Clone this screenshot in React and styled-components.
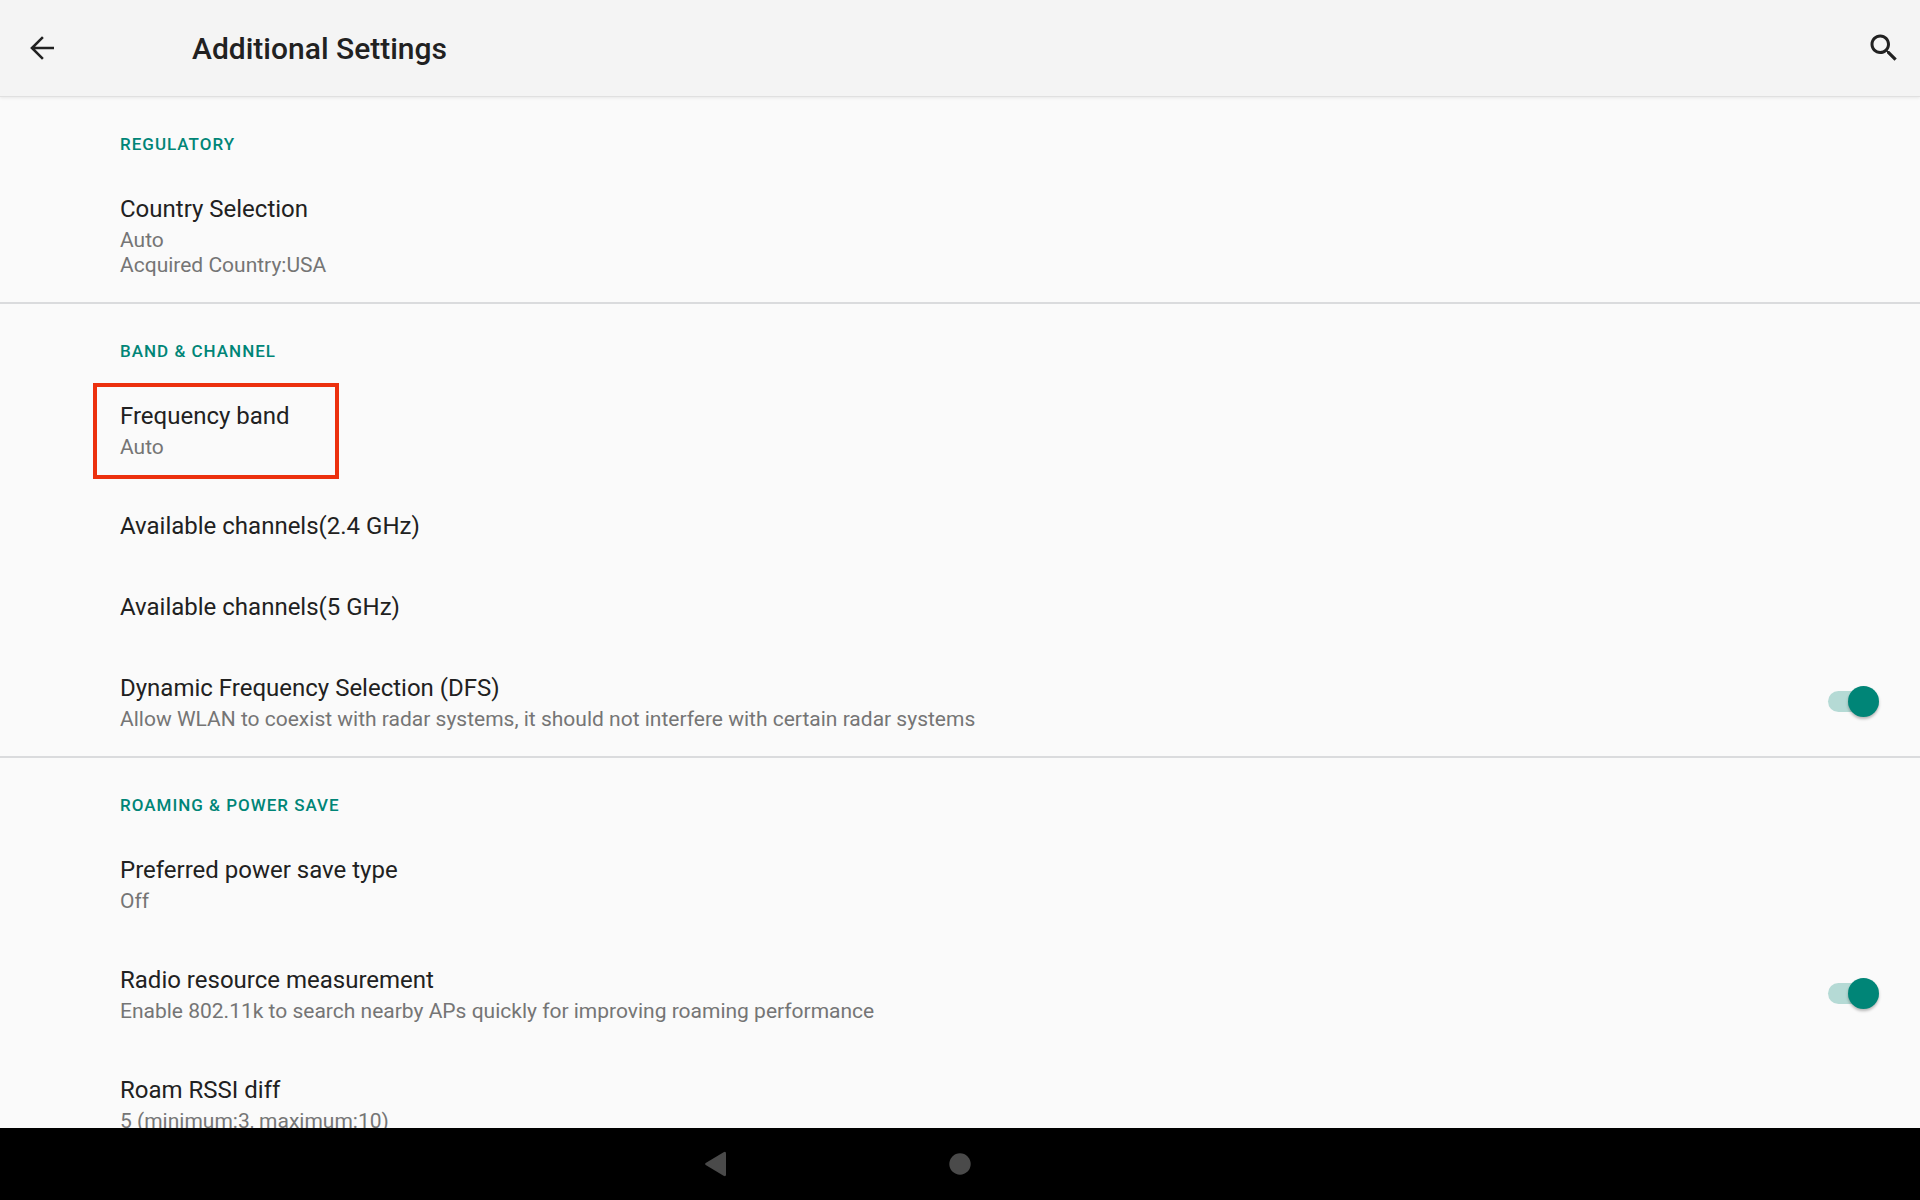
import React, { useId } from "react";
import styled, { createGlobalStyle } from "styled-components";

const GlobalStyle = createGlobalStyle`
  *, *::before, *::after { box-sizing: border-box; }
  body {
    margin: 0;
    background: #fafafa;
    color: #212121;
    font-family: Roboto, "Noto Sans", sans-serif;
  }
`;

const Screen = styled.div`
  display: flex;
  flex-direction: column;
  height: 100vh;
  overflow: hidden;
`;

const AppBar = styled.header`
  display: flex;
  align-items: center;
  flex: none;
  height: 96px;
  padding: 0 18px 0 24px;
  background: #f4f4f4;
  box-shadow: 0 1px 0 #e0e0e0, 0 2px 3px rgba(0, 0, 0, 0.08);
  z-index: 1;
`;

const IconButton = styled.button`
  display: flex;
  flex: none;
  padding: 0;
  border: 0;
  background: none;
  color: #212121;
  cursor: pointer;
`;

const ScreenTitle = styled.h1`
  flex: 1;
  margin: 0;
  padding: 2px 0 0 132px;
  font-size: 30px;
  font-weight: 500;
  line-height: 36px;
`;

const Content = styled.main`
  flex: 1;
  min-height: 0;
  overflow-y: auto;
  scrollbar-width: none;
`;

const Section = styled.section`
  & + & {
    margin-top: -2px;
    border-top: 2px solid #dadbdd;
  }
`;

const SectionTitle = styled.h2`
  margin: 0;
  padding: ${(p) => (p.$first ? 36 : 35)}px 120px 13px;
  color: #008577;
  font-size: 17px;
  font-weight: 500;
  line-height: 24px;
  letter-spacing: 1px;
  text-transform: uppercase;
`;

const Row = styled.div`
  position: relative;
  display: flex;
  align-items: center;
  width: 100%;
  padding: 24px 41px 24px 120px;
  border: 0;
  background: none;
  color: inherit;
  font: inherit;
  text-align: left;
  cursor: pointer;
`;

const RowText = styled.span`
  display: block;
  flex: 1;
`;

const RowTitle = styled.span`
  display: block;
  font-size: 24px;
  line-height: 33px;
`;

const RowSummary = styled.span`
  display: block;
  padding: 2px 0;
  color: #757575;
  font-size: 21px;
  line-height: 25px;
  white-space: pre-line;
`;

const Highlight = styled.span`
  position: absolute;
  top: 7px;
  bottom: 7px;
  left: 93px;
  width: 246px;
  border: 4px solid #ec300e;
  pointer-events: none;
`;

const Switch = styled.input`
  appearance: none;
  display: grid;
  align-items: center;
  flex: none;
  width: 51px;
  height: 31px;
  margin: 0 0 4px;
  cursor: pointer;

  &::before,
  &::after {
    content: "";
    grid-area: 1 / 1;
  }
  &::before {
    width: 42px;
    height: 21px;
    border-radius: 11px;
    background: #bdbdbd;
  }
  &::after {
    width: 31px;
    height: 31px;
    border-radius: 50%;
    background: #ececec;
    box-shadow: 0 2px 3px rgba(0, 0, 0, 0.28);
  }
  &:checked::before { background: #b5dad5; }
  &:checked::after {
    justify-self: end;
    background: #008577;
  }
`;

const NavBar = styled.nav`
  display: flex;
  align-items: center;
  justify-content: center;
  flex: none;
  height: 72px;
  background: #000;
`;

const NavSlot = styled.div`
  display: flex;
  justify-content: center;
  width: 240px;
`;

const NavButton = styled(IconButton)`
  color: #4a4a4a;
`;

function Preference({ title, summary, toggle, highlighted }) {
  const id = useId();
  const text = (
    <RowText>
      <RowTitle>{title}</RowTitle>
      {summary && <RowSummary>{summary}</RowSummary>}
    </RowText>
  );
  if (toggle) {
    return (
      <Row as="label" htmlFor={id}>
        {text}
        <Switch id={id} type="checkbox" role="switch" defaultChecked />
      </Row>
    );
  }
  return (
    <Row as="button" type="button">
      {text}
      {highlighted && <Highlight />}
    </Row>
  );
}

const sections = [
  {
    title: "Regulatory",
    items: [{ title: "Country Selection", summary: "Auto\nAcquired Country:USA" }],
  },
  {
    title: "Band & Channel",
    items: [
      { title: "Frequency band", summary: "Auto", highlighted: true },
      { title: "Available channels(2.4 GHz)" },
      { title: "Available channels(5 GHz)" },
      {
        title: "Dynamic Frequency Selection (DFS)",
        summary:
          "Allow WLAN to coexist with radar systems, it should not interfere with certain radar systems",
        toggle: true,
      },
    ],
  },
  {
    title: "Roaming & Power save",
    items: [
      { title: "Preferred power save type", summary: "Off" },
      {
        title: "Radio resource measurement",
        summary: "Enable 802.11k to search nearby APs quickly for improving roaming performance",
        toggle: true,
      },
      { title: "Roam RSSI diff", summary: "5 (minimum:3, maximum:10)" },
    ],
  },
];

export default function App() {
  return (
    <>
      <GlobalStyle />
      <Screen>
        <AppBar>
          <IconButton type="button" aria-label="Navigate up">
            <svg width="36" height="36" viewBox="0 0 24 24" fill="none" stroke="currentColor" strokeWidth="1.7">
              <path d="M12.6 4.8 5.3 12l7.3 7.2M5.3 12H20" />
            </svg>
          </IconButton>
          <ScreenTitle>Additional Settings</ScreenTitle>
          <IconButton type="button" aria-label="Search settings">
            <svg width="36" height="36" viewBox="0 0 24 24" fill="currentColor">
              <path d="M15.5 14h-.79l-.28-.27C15.41 12.59 16 11.11 16 9.5 16 5.91 13.09 3 9.5 3S3 5.91 3 9.5 5.91 16 9.5 16c1.61 0 3.09-.59 4.23-1.57l.27.28v.79l5 4.99L20.49 19l-4.99-5zm-6 0C7.01 14 5 11.99 5 9.5S7.01 5 9.5 5 14 7.01 14 9.5 11.99 14 9.5 14z" />
            </svg>
          </IconButton>
        </AppBar>
        <Content>
          {sections.map((section, index) => (
            <Section key={section.title}>
              <SectionTitle $first={index === 0}>{section.title}</SectionTitle>
              {section.items.map((item) => (
                <Preference key={item.title} {...item} />
              ))}
            </Section>
          ))}
        </Content>
        <NavBar>
          <NavSlot>
            <NavButton type="button" aria-label="Back">
              <svg width="42" height="42" viewBox="0 0 42 42" fill="currentColor">
                <path d="M6.7 20.1 24.6 9.2Q27 8 27 10.4v21.2Q27 34 24.6 32.8L6.7 21.9Q5.3 21 6.7 20.1z" />
              </svg>
            </NavButton>
          </NavSlot>
          <NavSlot>
            <NavButton type="button" aria-label="Home">
              <svg width="42" height="42" viewBox="0 0 42 42" fill="currentColor">
                <circle cx="21" cy="21" r="10.7" />
              </svg>
            </NavButton>
          </NavSlot>
          <NavSlot />
        </NavBar>
      </Screen>
    </>
  );
}
